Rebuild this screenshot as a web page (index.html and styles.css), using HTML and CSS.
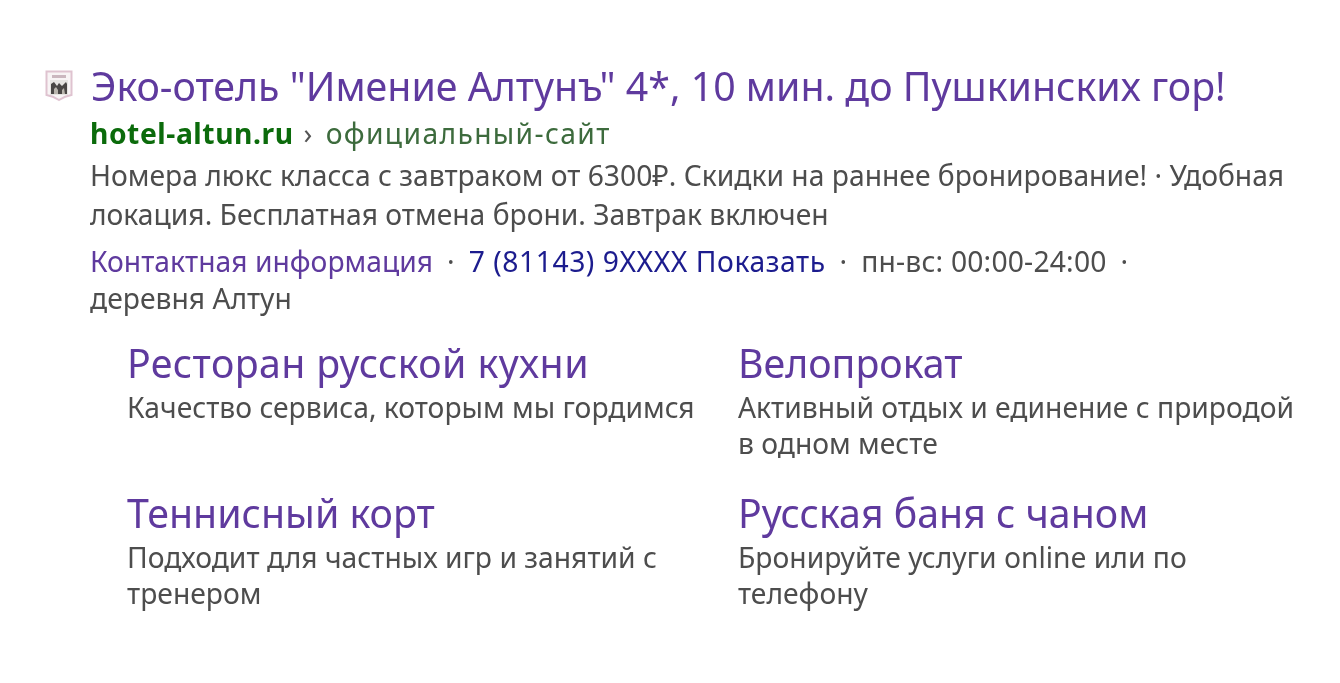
FILE: index.html
```html
<!DOCTYPE html>
<html lang="en">
<head>
    <meta charset="UTF-8">
    <title>Эко-отель "Имение Алтунъ"</title>
    <link rel="stylesheet" href="styles.css">
</head>
<body>
    <div class="ad">
        <!-- Title row with favicon -->
        <div class="title-row">
            <svg class="favicon" width="28" height="32" viewBox="0 0 28 32">
                <path d="M1.5 1.5H26.5V25Q20 26 14 30Q8 26 1.5 25Z" fill="#f8f4f5" stroke="#dfc3d0" stroke-width="2"/>
                <rect x="7" y="5" width="14" height="3" fill="#cbb7bf"/>
                <rect x="5" y="10" width="18" height="15" fill="#e6e4e1"/>
                <path d="M6 24V14L9 12L12 16L14 13L17 16L21 12L22 14V24Z" fill="#4a4745"/>
                <path d="M9 24V19L11 17L13 20V24ZM17 24V20L19 18L20 24Z" fill="#b9b5ad"/>
            </svg>
            <a class="title">Эко-отель "Имение Алтунъ" 4*, 10 мин. до Пушкинских гор!</a>
        </div>
        <div class="path"><b>hotel-altun.ru</b><span class="sep">›</span>официальный-сайт</div>
        <p class="text">Номера люкс класса с завтраком от 6300₽. Скидки на раннее бронирование! · Удобная локация. Бесплатная отмена брони. Завтрак включен</p>
        <p class="meta">
            <span class="purple">Контактная информация</span><span class="dot">·</span><span class="phone">7 (81143) 9XXXX Показать</span><span class="dot">·</span><span class="hours">пн-вс: 00:00-24:00</span><span class="dot">·</span><br>деревня Алтун
        </p>
        <!-- Sitelinks -->
        <div class="links">
            <div class="link">
                <a class="link-title wide">Ресторан русской кухни</a>
                <div class="link-text">Качество сервиса, которым мы гордимся</div>
            </div>
            <div class="link">
                <a class="link-title">Велопрокат</a>
                <div class="link-text">Активный отдых и единение с природой в одном месте</div>
            </div>
            <div class="link">
                <a class="link-title">Теннисный корт</a>
                <div class="link-text">Подходит для частных игр и занятий с тренером</div>
            </div>
            <div class="link">
                <a class="link-title">Русская баня с чаном</a>
                <div class="link-text">Бронируйте услуги online или по телефону</div>
            </div>
        </div>
    </div>
</body>
</html>
```

FILE: styles.css
```css
body {
    margin: 0;
    background: #fff;
    color: #4d4d4d;
    font-family: "Noto Sans", Arial, sans-serif;
}
.ad {
    width: 1250px;
    padding: 62px 0 0 45px;
    filter: blur(0.4px);
}
.title-row {
    display: flex;
    align-items: center;
    height: 48px;
}
.favicon {
    flex: none;
    margin-right: 18px;
    filter: blur(0.7px);
}
.title {
    font-size: 39.3px;
    color: #5f3a9e;
    white-space: nowrap;
}
.path {
    margin: 3px 0 0 45px;
    height: 40px;
    line-height: 40px;
    font-size: 28.25px;
    letter-spacing: 1.35px;
    color: #3d6b3d;
}
.path b {
    color: #0b6b0b;
    letter-spacing: 0.55px;
}
.sep {
    margin: 0 12px 0 10px;
    color: #555;
}
.text {
    margin: 3px 0 0 45px;
    width: 1200px;
    font-size: 28.25px;
    line-height: 39px;
}
.meta {
    margin: 9px 0 0 45px;
    font-size: 28.25px;
    line-height: 37px;
}
.purple {
    color: #5f3a9e;
}
.phone {
    color: #1c1c8e;
    letter-spacing: 0.55px;
}
.hours {
    letter-spacing: 0.2px;
}
.dot {
    margin: 0 14px;
}
.links {
    display: grid;
    grid-template-columns: 611px 570px;
    row-gap: 28px;
    margin: 22px 0 0 82px;
}
.link-title {
    display: block;
    font-size: 39.3px;
    line-height: 48px;
    color: #5f3a9e;
}
.link-title.wide {
    letter-spacing: 0.4px;
}
.link-text {
    margin-top: 2px;
    font-size: 28.25px;
    line-height: 36px;
}
```
